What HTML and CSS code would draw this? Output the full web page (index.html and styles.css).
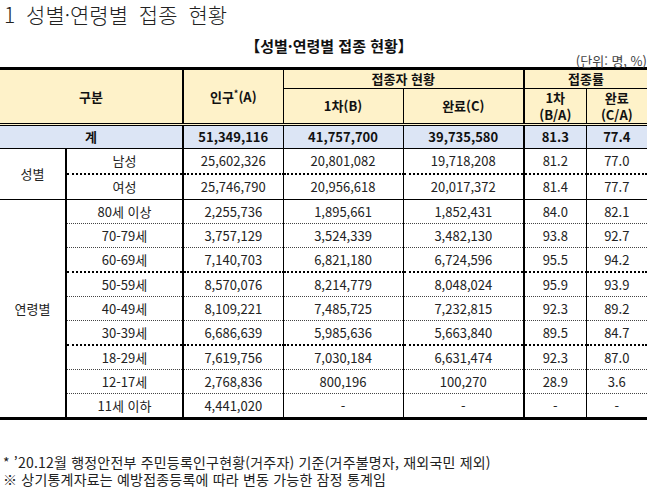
FILE: index.html
```html
<!DOCTYPE html>
<html lang="ko">
<head>
<meta charset="utf-8">
<link rel="stylesheet" href="styles.css">
</head>
<body>
<div class="title">1 성별·연령별 접종 현황</div>
<div class="caption">【성별·연령별 접종 현황】</div>
<div class="unit">(단위: 명, %)</div>
<table class="stats">
  <colgroup>
    <col class="c1"><col class="c2"><col class="c3"><col class="c4"><col class="c5"><col class="c6"><col class="c7">
  </colgroup>
  <thead>
    <tr class="h1">
      <th colspan="2" rowspan="2">구분</th>
      <th rowspan="2" class="bl2">인구<sup>*</sup>(A)</th>
      <th colspan="2" class="bl1">접종자 현황</th>
      <th colspan="2" class="bl2">접종률</th>
    </tr>
    <tr class="h2">
      <th class="bl1">1차(B)</th>
      <th class="bl1">완료(C)</th>
      <th class="bl2"><span class="ln">1차</span><span class="ln">(B/A)</span></th>
      <th class="bl1"><span class="ln">완료</span><span class="ln">(C/A)</span></th>
    </tr>
  </thead>
  <tbody>
    <tr class="total">
      <td colspan="2">계</td>
      <td class="bl2">51,349,116</td>
      <td class="bl1">41,757,700</td>
      <td class="bl1">39,735,580</td>
      <td class="bl2">81.3</td>
      <td class="bl1">77.4</td>
    </tr>
    <tr class="r dot2">
      <td rowspan="2" class="grp solid">성별</td>
      <td class="bl2">남성</td>
      <td class="bl2">25,602,326</td>
      <td class="bl1">20,801,082</td>
      <td class="bl1">19,718,208</td>
      <td class="bl2">81.2</td>
      <td class="bl1">77.0</td>
    </tr>
    <tr class="r solid">
      <td class="bl2">여성</td>
      <td class="bl2">25,746,790</td>
      <td class="bl1">20,956,618</td>
      <td class="bl1">20,017,372</td>
      <td class="bl2">81.4</td>
      <td class="bl1">77.7</td>
    </tr>
    <tr class="a dot1">
      <td rowspan="9" class="grp">연령별</td>
      <td class="bl2">80세 이상</td>
      <td class="bl2">2,255,736</td>
      <td class="bl1">1,895,661</td>
      <td class="bl1">1,852,431</td>
      <td class="bl2">84.0</td>
      <td class="bl1">82.1</td>
    </tr>
    <tr class="a dot1">
      <td class="bl2">70-79세</td>
      <td class="bl2">3,757,129</td>
      <td class="bl1">3,524,339</td>
      <td class="bl1">3,482,130</td>
      <td class="bl2">93.8</td>
      <td class="bl1">92.7</td>
    </tr>
    <tr class="a dot2">
      <td class="bl2">60-69세</td>
      <td class="bl2">7,140,703</td>
      <td class="bl1">6,821,180</td>
      <td class="bl1">6,724,596</td>
      <td class="bl2">95.5</td>
      <td class="bl1">94.2</td>
    </tr>
    <tr class="a dot1">
      <td class="bl2">50-59세</td>
      <td class="bl2">8,570,076</td>
      <td class="bl1">8,214,779</td>
      <td class="bl1">8,048,024</td>
      <td class="bl2">95.9</td>
      <td class="bl1">93.9</td>
    </tr>
    <tr class="a dot1">
      <td class="bl2">40-49세</td>
      <td class="bl2">8,109,221</td>
      <td class="bl1">7,485,725</td>
      <td class="bl1">7,232,815</td>
      <td class="bl2">92.3</td>
      <td class="bl1">89.2</td>
    </tr>
    <tr class="a dot2">
      <td class="bl2">30-39세</td>
      <td class="bl2">6,686,639</td>
      <td class="bl1">5,985,636</td>
      <td class="bl1">5,663,840</td>
      <td class="bl2">89.5</td>
      <td class="bl1">84.7</td>
    </tr>
    <tr class="a dot1">
      <td class="bl2">18-29세</td>
      <td class="bl2">7,619,756</td>
      <td class="bl1">7,030,184</td>
      <td class="bl1">6,631,474</td>
      <td class="bl2">92.3</td>
      <td class="bl1">87.0</td>
    </tr>
    <tr class="a dot1">
      <td class="bl2">12-17세</td>
      <td class="bl2">2,768,836</td>
      <td class="bl1">800,196</td>
      <td class="bl1">100,270</td>
      <td class="bl2">28.9</td>
      <td class="bl1">3.6</td>
    </tr>
    <tr class="a last">
      <td class="bl2">11세 이하</td>
      <td class="bl2">4,441,020</td>
      <td class="bl1">-</td>
      <td class="bl1">-</td>
      <td class="bl2">-</td>
      <td class="bl1">-</td>
    </tr>
  </tbody>
</table>
<div class="notes">
  <p>* ’20.12월 행정안전부 주민등록인구현황(거주자) 기준(거주불명자, 재외국민 제외)</p>
  <p>※ 상기통계자료는 예방접종등록에 따라 변동 가능한 잠정 통계임</p>
</div>
</body>
</html>
```

FILE: styles.css
```css
html, body {
  margin: 0;
  padding: 0;
  background: #fff;
}
body {
  width: 658px;
  height: 488px;
  overflow: hidden;
  font-family: "Noto Sans CJK KR", "Noto Sans", sans-serif;
  color: #111;
}
.title {
  height: 37px;
  box-sizing: border-box;
  padding: 0 0 0 4px;
  font-size: 21px;
  line-height: 28px;
  font-weight: 300;
  word-spacing: 5px;
  color: #222;
}
.caption {
  height: 18px;
  text-align: center;
  font-size: 15px;
  line-height: 18px;
  font-weight: bold;
  color: #111;
}
.unit {
  height: 12px;
  text-align: right;
  padding-right: 11px;
  font-size: 13px;
  line-height: 12px;
  color: #444;
}
.stats {
  width: 647px;
  table-layout: fixed;
  border-collapse: collapse;
  font-size: 13px;
  border-top: 3px solid #000;
  border-bottom: 3px solid #000;
}
.c1 { width: 66px; }
.c2 { width: 117px; }
.c3 { width: 100px; }
.c4 { width: 120px; }
.c5 { width: 121px; }
.c6 { width: 62px; }
.c7 { width: 61px; }
.stats th, .stats td {
  padding: 0;
  text-align: center;
  vertical-align: middle;
  line-height: 14px;
}
.stats th {
  background: #fef2c9;
  font-weight: bold;
  color: #111;
}
.ln {
  display: block;
  line-height: 17px;
}
.stats thead tr.h1 th { height: 18px; border-bottom: 1px solid #000; }
.stats thead tr.h1 th[rowspan] { border-bottom: 3px double #000; }
.stats thead tr.h2 th { height: 34px; border-bottom: 3px double #000; }
.stats sup {
  font-size: 9px;
  line-height: 0;
  vertical-align: 5px;
}
.stats td { color: #222; }
.bl1 { border-left: 1px solid #000; }
.bl2 { border-left: 2px solid #000; }
.total td {
  height: 22px;
  background: #dce5f5;
  font-weight: bold;
  color: #111;
  border-bottom: 1px solid #000;
}
.r td { height: 24px; }
.a td { height: 23px; }
.dot2 td { border-bottom: 2px dotted #000; }
.dot1 td { border-bottom: 1px dotted #444; }
.solid td { border-bottom: 1px solid #000; }
.stats td.grp { border-bottom: 1px solid #000; }
.last td { border-bottom: 3px solid #000; }
.notes {
  margin-top: 34px;
  padding-left: 3px;
  font-size: 14px;
  letter-spacing: 0.2px;
  line-height: 17px;
  color: #222;
}
.notes p { margin: 0; }
```
